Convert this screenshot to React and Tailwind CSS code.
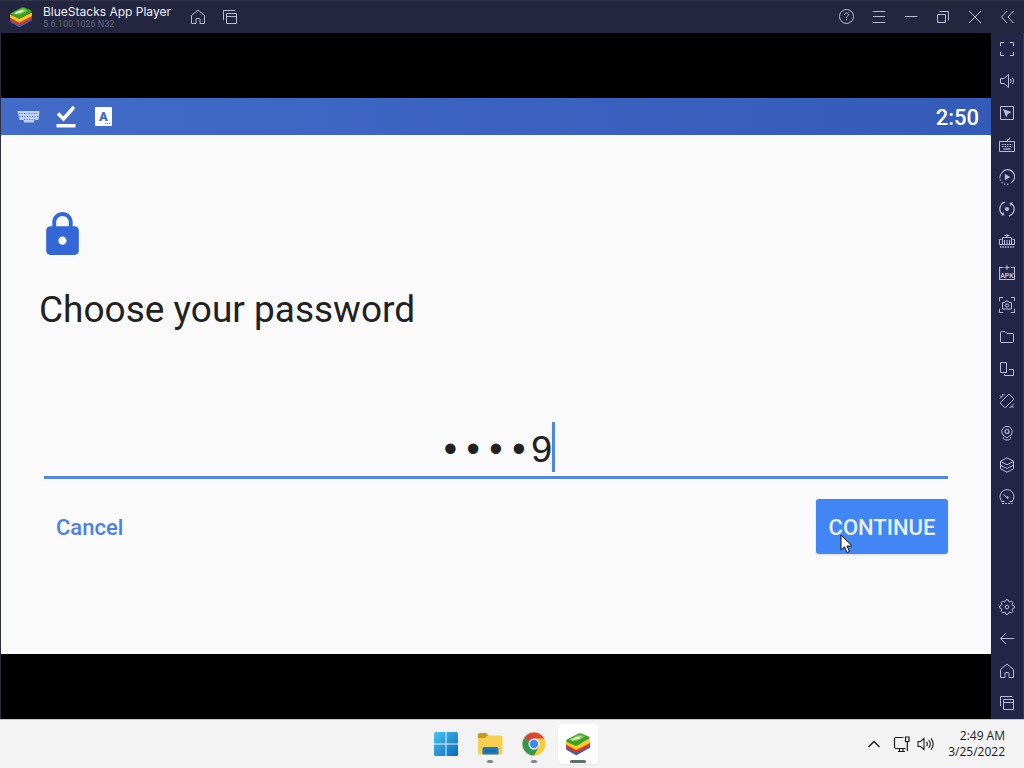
import React from 'react';

function Line({ children, size = 16, className = '' }) {
  return (
    <svg
      width={size}
      height={size}
      viewBox="0 0 16 16"
      fill="none"
      stroke="currentColor"
      strokeWidth="1"
      className={className}
      aria-hidden="true"
    >
      {children}
    </svg>
  );
}

const HomeIcon = () => (
  <Line>
    <path d="M1.500 6.500 8 1l6.500 5.500v8h-4.500V10.500a1 1 0 0 0-1-1H7a1 1 0 0 0-1 1v4H1.500z" strokeLinejoin="round" />
  </Line>
);

const RecentsIcon = () => (
  <Line>
    <path d="M1.500 11V1.500H13M4.500 4.500h10v10h-10zM4.500 7.500h10" />
  </Line>
);

const HelpIcon = () => (
  <Line>
    <circle cx="7.500" cy="7.500" r="7" />
    <path d="M5.500 6c0-1.200.8-2 2-2s2 .8 2 1.800c0 1.300-2 1.400-2 3M7.500 10v1.200" />
  </Line>
);

const MenuIcon = () => (
  <Line>
    <path d="M2 2.500h12M2 7.500h12M2 13.500h12" />
  </Line>
);

const MinimizeIcon = () => (
  <Line>
    <path d="M2 7.500h12" />
  </Line>
);

const RestoreIcon = () => (
  <Line>
    <path d="M2.500 5.500h8v8h-8zM4.500 2.500h9v9" />
  </Line>
);

const CloseIcon = () => (
  <Line>
    <path d="m2 2 12 12M14 2 2 14" />
  </Line>
);

const CollapseIcon = () => (
  <Line>
    <path d="M8 2 2.500 8 8 14M14.500 2 9 8l5.500 6" />
  </Line>
);

const FullscreenIcon = () => (
  <Line>
    <path d="M1.500 5V1.500H5M11 1.500h3.500V5M14.500 11v3.500H11M5 14.500H1.500V11" />
  </Line>
);

const VolumeIcon = () => (
  <Line>
    <path d="M1.500 5.500H5L9.500 1.500v13L5 10.500H1.500zM11.500 6c.8 1.200.8 2.800 0 4M13.500 4.800c1.300 2 1.300 4.400 0 6.400" />
  </Line>
);

const CursorLockIcon = () => (
  <Line>
    <path d="M1.500 1.500h13v13h-13z" />
    <path d="m4 4 8.500 3-3.500 1.800L7.200 12.500z" fill="currentColor" stroke="none" />
  </Line>
);

const KeyboardIcon = () => (
  <Line>
    <path d="M.5 4.500h15v10H.5zM8.500 4.500V2.500h2V.5" />
    <path d="M3 7.500h10.500M3 9.500h10.500" strokeDasharray="1.500 1" />
    <path d="M4.500 12h7" strokeWidth="1.300" />
  </Line>
);

const PlayMacroIcon = () => (
  <Line>
    <path d="M3 3.500a7 7 0 1 1 9.500 10" strokeWidth="1.200" />
    <path d="M.8 7.500a7 7 0 0 0 10.500 6.800" strokeWidth="1.200" strokeDasharray="1.200 1.800" />
    <path d="M1.200 7.500Q1.200 5.500 3 3.500" />
    <path d="m5.800 4.800 5.400 3.200-5.400 3.200z" fill="currentColor" stroke="none" />
  </Line>
);

const SyncIcon = () => (
  <Line>
    <path d="M6 1.200A7 7 0 0 0 4 13.800M10 14.800a7 7 0 0 0 2-12.600" strokeWidth="1.200" />
    <path d="m2 14.500 3.500-.2L4.500 11zM14 1.500l-3.500.2 1 3.300z" fill="currentColor" stroke="none" />
    <circle cx="8" cy="8" r="2.100" fill="currentColor" stroke="none" />
  </Line>
);

const MemoryIcon = () => (
  <Line>
    <path d="M2.500 6.500h-2v5h15v-5h-2M3.500 11V4.500h9V11M8 4.500V1M5.500 2.500h5" />
    <path d="M5.500 7v4M8 7v4M10.500 7v4" />
    <path d="M1 14h14" strokeWidth="1.500" strokeDasharray="1.500 1" />
  </Line>
);

const ApkIcon = () => (
  <Line>
    <path d="M4 2.500H.5v12h15v-12H12" strokeWidth="1.200" />
    <path d="M8 0v5M5.500 2.500h5" />
    <text x="8" y="12.500" textAnchor="middle" fill="currentColor" stroke="none" className="font-['Roboto',sans-serif] text-[7px] font-bold">APK</text>
  </Line>
);

const ScreenshotIcon = () => (
  <Line>
    <path d="M.5 4V.5H4M12 .5h3.500V4M15.500 12v3.500H12M4 15.500H.5V12" />
    <path d="M3.500 5.500H6l1-1.500h2l1 1.500h2.500v6.500h-9z" />
    <circle cx="8" cy="8.500" r="1.600" />
  </Line>
);

const FolderIcon = () => (
  <Line>
    <path d="M1.500 3.500a1 1 0 0 1 1-1H6l2 2h5.500a1 1 0 0 1 1 1v7a1 1 0 0 1-1 1h-11a1 1 0 0 1-1-1z" />
  </Line>
);

const MultiScreenIcon = () => (
  <Line>
    <path d="M1.500 1.500h6v10h-6zM10 8.500h4.500v6h-9V13" />
  </Line>
);

const RotateIcon = () => (
  <Line>
    <path d="m1.700 9.200 7.600-7.500a1 1 0 0 1 1.400 0l3.600 3.600a1 1 0 0 1 0 1.400l-7.600 7.600a1 1 0 0 1-1.400 0l-3.600-3.700a1 1 0 0 1 0-1.400z" />
    <path d="M1 5.500 5.500 1M1 2.500l1.500 1.500M4 1l-1 1M10.500 15l4.500-4.500M12 14.500l1.500-1.500M13.500 15l1.500-1.500" />
  </Line>
);

const LocationIcon = () => (
  <Line>
    <path d="M6.200 11.500a5.200 5.200 0 1 1 3.600 0L8 13z" />
    <circle cx="8" cy="6.500" r="2" strokeWidth="1.200" />
    <path d="M5 12c-2 1.200 0 3 3 3s5-1.800 3-3" />
  </Line>
);

const LayersIcon = () => (
  <Line>
    <path d="m8 .8 6.500 3.400v7.600L8 15.200l-6.500-3.400V4.200zM1.500 4.500 8 7.800l6.500-3.300M1.500 8.200 8 11.500l6.500-3.300" strokeLinejoin="round" />
  </Line>
);

const GaugeIcon = () => (
  <Line>
    <path d="M3 12.500a7 7 0 1 1 10 0M4.500 5.500 8.500 9" />
    <circle cx="8.500" cy="8.500" r=".8" fill="currentColor" />
    <path d="M2.500 12.500h3M10.500 12.500h3" />
    <path d="M3 14.500h10.500" strokeDasharray="2 1" />
  </Line>
);

const SettingsIcon = () => (
  <Line>
    <path
      d="M6.500 2.300 7 .7h2l.5 1.600 1.400.6 1.500-.8 1.500 1.500-.8 1.500.6 1.400 1.600.5v2l-1.600.5-.6 1.400.8 1.500-1.500 1.500-1.500-.8-1.400.6-.5 1.600H7l-.5-1.600-1.400-.6-1.500.8-1.500-1.500.8-1.500-.6-1.400L.7 9V7l1.600-.5.6-1.400-.8-1.500 1.500-1.500 1.500.8z"
      strokeLinejoin="round"
    />
    <circle cx="8" cy="8" r="1.800" />
  </Line>
);

const BackIcon = () => (
  <Line>
    <path d="M15 7.500H1.500M7 2 1.500 7.500 7 13" />
  </Line>
);

function BlueStacksLogo({ className }) {
  return (
    <svg viewBox="0 0 24 22" className={className} aria-hidden="true">
      <path d="M0 13.500 10 19l14-7v2.800L11 22q-1 .3-2-.2L.8 17Q0 16.500 0 15.500z" fill="#2b6cb5" />
      <path d="M0 10.500 10 16l14-7v4L11 19.800q-1 .3-2-.2L.8 15Q0 14.500 0 13.500z" fill="#e0322b" />
      <path d="M0 8 10 13l14-7v4L11 16.800q-1 .3-2-.2L.8 12Q0 11.500 0 10.500z" fill="#fbc91b" />
      <path d="M1 6.500 12.500.5q1.500-.6 3 0L23 3.700q1.500.9 0 2L11.500 12.500q-1.500.6-3 0L1 9q-1.500-1.200 0-2.500z" fill="#3e9f25" />
      <path d="M2.500 6.800 13 1.600q1-.4 2 0l4.500 2-8 4.400-5 .2z" fill="#79c64c" />
      <path d="M5 6.500 10 4l6-.8-2.500 1.300 1.500.7-5.500 1.400-3 .8z" fill="#e3f6d5" />
    </svg>
  );
}

function WindowsLogo() {
  return (
    <svg width="24" height="24" viewBox="0 0 24 24" aria-hidden="true">
      <defs>
        <linearGradient id="win" x1="0" y1="0" x2="1" y2="1">
          <stop offset="0" stopColor="#49c4f0" />
          <stop offset="1" stopColor="#0868bd" />
        </linearGradient>
      </defs>
      <path d="M1.500 0H11.500V11.500H0V1.500Q0 0 1.500 0zM12.500 0h10Q24 0 24 1.500v10H12.500zM0 12.500h11.500V24h-10Q0 24 0 22.500zM12.500 12.500H24v10q0 1.500-1.500 1.500h-10z" fill="url(#win)" />
    </svg>
  );
}

function ExplorerLogo() {
  return (
    <svg width="26" height="24" viewBox="0 0 26 24" aria-hidden="true">
      <path d="M1 3Q1 1 3 1h6l3 3h-2L8 7H1z" fill="#c59a1b" />
      <path d="M1 6h7l3-2.500h13q1.500 0 1.500 1.500v16q0 1.500-1.500 1.500H2.500Q1 22.500 1 21z" fill="#f9cf52" />
      <path d="M5.500 22.500V17q0-2 2-2h12q2 0 2 2v5.500z" fill="#1d78bd" />
      <path d="M8 19h11" stroke="#12609f" />
    </svg>
  );
}

function ChromeLogo() {
  return (
    <svg width="24" height="24" viewBox="0 0 24 24" aria-hidden="true">
      <circle cx="12" cy="12" r="11.500" fill="#fbcb35" />
      <path d="M12 12 2.040 6.250A11.500 11.500 0 0 1 21.960 6.250L22 6.500H12z" fill="#dc4437" />
      <path d="M2.040 6.250A11.500 11.500 0 0 0 12 23.500L17 14.800 12 12z" fill="#31984e" />
      <circle cx="12" cy="12" r="5.500" fill="#fff" />
      <circle cx="12" cy="12" r="4.300" fill="#4286f0" />
    </svg>
  );
}

function IconButton({ label, children }) {
  return (
    <button type="button" aria-label={label} className="flex h-8 w-8 shrink-0 items-center justify-center">
      {children}
    </button>
  );
}

const sideTools = [
  ['Full screen', FullscreenIcon],
  ['Volume', VolumeIcon],
  ['Lock cursor', CursorLockIcon],
  ['Game controls', KeyboardIcon],
  ['Macro recorder', PlayMacroIcon],
  ['Sync operations', SyncIcon],
  ['Trim memory', MemoryIcon],
  ['Install APK', ApkIcon],
  ['Screenshot', ScreenshotIcon],
  ['Media folder', FolderIcon],
  ['Multi-instance', MultiScreenIcon],
  ['Rotate', RotateIcon],
  ['Set location', LocationIcon],
  ['Layers', LayersIcon],
  ['Performance', GaugeIcon],
];

const navTools = [
  ['Settings', SettingsIcon],
  ['Back', BackIcon],
  ['Home', HomeIcon],
  ['Recent apps', RecentsIcon],
];

function TitleBar() {
  return (
    <header className="flex h-[33px] items-center border-t border-[#32344c] bg-[#24263f] pl-2.5 pr-px">
      <BlueStacksLogo className="h-5 w-[22px]" />
      <div className="ml-[11px] w-[139px] whitespace-nowrap">
        <h1 className="font-['Inter',sans-serif] text-[12px] leading-[14px] text-[#f0f0f8]">BlueStacks App Player</h1>
        <p className="text-[9px] leading-[11px] text-[#606279]">5.6.100.1026 N32</p>
      </div>
      <IconButton label="Home"><HomeIcon /></IconButton>
      <IconButton label="Recent apps"><RecentsIcon /></IconButton>
      <div className="ml-auto flex">
        <IconButton label="Help"><HelpIcon /></IconButton>
        <IconButton label="Menu"><MenuIcon /></IconButton>
        <IconButton label="Minimize"><MinimizeIcon /></IconButton>
        <IconButton label="Restore"><RestoreIcon /></IconButton>
        <IconButton label="Close"><CloseIcon /></IconButton>
        <IconButton label="Collapse sidebar"><CollapseIcon /></IconButton>
      </div>
    </header>
  );
}

function StatusBar() {
  return (
    <div className="flex h-[37px] items-center bg-gradient-to-r from-[#426cc8] via-[#3b62c0] to-[#345bb7] pl-4 pr-3 text-white">
      <svg width="24" height="14" viewBox="0 0 24 14" aria-hidden="true">
        <path d="M.5 1h22l-1 9h-4l-.5 2.500H7L6.500 10h-4z" fill="#bfd0f3" />
        <path d="M2 3.500h20M2.500 6.500h19M7 9.500h11" stroke="#426cc8" strokeDasharray="1 1.500" />
      </svg>
      <svg width="20" height="23" viewBox="0 0 20 23" className="ml-[15px]" aria-hidden="true">
        <path d="m2 8.500 5.500 5.500L18 2" fill="none" stroke="#fff" strokeWidth="3.500" />
        <path d="M.5 19h19v3.500H.5z" fill="#fff" />
      </svg>
      <svg width="17" height="19" viewBox="0 0 17 19" className="ml-[19px]" aria-hidden="true">
        <rect width="17" height="19" rx="1" fill="#fff" />
        <text x="8.500" y="14" textAnchor="middle" fill="#426cc8" className="text-[13px] font-black">A</text>
        <path d="M10 16.500h5" stroke="#426cc8" strokeDasharray="1 1" />
      </svg>
      <time className="ml-auto pt-0.5 text-[22px] font-medium leading-6">2:50</time>
    </div>
  );
}

function PasswordScreen() {
  return (
    <main className="pt-[75px] text-[#212121]">
      <div className="px-[37px]">
        <svg width="49" height="49" viewBox="0 0 24 24" fill="#3367d6" aria-hidden="true">
          <path d="M18 8h-1V6c0-2.760-2.240-5-5-5S7 3.240 7 6v2H6c-1.100 0-2 .9-2 2v10c0 1.100.9 2 2 2h12c1.100 0 2-.9 2-2V10c0-1.100-.9-2-2-2zm-6 9c-1.100 0-2-.9-2-2s.9-2 2-2 2 .9 2 2-.9 2-2 2zm3.100-9H8.900V6c0-1.710 1.390-3.100 3.100-3.100s3.100 1.390 3.100 3.100v2z" />
        </svg>
        <h2 className="mt-[27px] pl-px text-[37px] leading-[48px]">
          <label htmlFor="password">Choose your password</label>
        </h2>
      </div>
      <form className="mt-[88px] px-[43px]" onSubmit={(e) => e.preventDefault()}>
        <div className="relative border-b-3 border-[#5086e4]">
          <input
            id="password"
            type="text"
            defaultValue="••••9"
            className="block h-[54px] w-full bg-transparent pt-1 text-center font-['Liberation_Mono',monospace] text-[38px] outline-none"
          />
          <span className="absolute left-1/2 top-0 ml-14 h-[50px] w-[3px] bg-[#5086e4]" />
        </div>
        <div className="mt-5 flex items-center justify-between text-[22px] font-medium">
          <button type="button" className="h-[55px] px-3 pt-0.5 text-[#4b80e6]">Cancel</button>
          <div className="relative">
            <button type="submit" className="h-[55px] min-w-[132px] rounded-[3px] bg-[#4285f4] pt-0.5 text-[#e9f1ff] shadow-sm">CONTINUE</button>
            <svg width="13" height="20" viewBox="0 0 13 20" className="absolute left-6 top-[35px]" aria-hidden="true">
              <path d="M1 1v15l3.500-3.200L7 18.500l2.500-1L7 12h5z" fill="#fff" stroke="#111" strokeWidth="1" />
            </svg>
          </div>
        </div>
      </form>
    </main>
  );
}

function SideBar() {
  return (
    <aside className="flex w-[33px] shrink-0 flex-col justify-between border-r border-[#34365a] bg-[#222546]">
      <div>
        {sideTools.map(([label, Icon]) => (
          <IconButton key={label} label={label}><Icon /></IconButton>
        ))}
      </div>
      <div>
        {navTools.map(([label, Icon]) => (
          <IconButton key={label} label={label}><Icon /></IconButton>
        ))}
      </div>
    </aside>
  );
}

function TaskButton({ label, active, running, children }) {
  return (
    <button
      type="button"
      aria-label={label}
      className={`relative flex h-10 w-10 items-center justify-center rounded-sm ${active ? 'bg-white shadow-xs' : ''}`}
    >
      {children}
      {running && (
        <span className={`absolute bottom-px h-[3px] rounded-full ${active ? 'w-4 bg-[#5d716b]' : 'w-1.5 bg-[#85878a]'}`} />
      )}
    </button>
  );
}

function TaskBar() {
  return (
    <footer className="grid h-[49px] grid-cols-[1fr_auto_1fr] items-center border-t border-[#c8c8c8] bg-[#f3f3f3] text-[#1b1b1b]">
      <div className="col-start-2 flex gap-1">
        <TaskButton label="Start"><WindowsLogo /></TaskButton>
        <TaskButton label="File Explorer" running><ExplorerLogo /></TaskButton>
        <TaskButton label="Chrome" running><ChromeLogo /></TaskButton>
        <TaskButton label="BlueStacks" running active><BlueStacksLogo className="h-[22px] w-6" /></TaskButton>
      </div>
      <div className="flex items-center justify-end pr-[19px]">
        <button type="button" aria-label="Show hidden icons">
          <svg width="14" height="8" viewBox="0 0 14 8" fill="none" stroke="currentColor" strokeWidth="1.400" aria-hidden="true">
            <path d="m1.500 7 5.500-5.500L12.500 7" />
          </svg>
        </button>
        <button type="button" aria-label="Network" className="ml-3">
          <svg width="18" height="17" viewBox="0 0 18 17" fill="none" stroke="currentColor" strokeWidth="1.200" aria-hidden="true">
            <path d="M10.500 1.500H3q-1.500 0-1.500 1.500v8q0 1.500 1.500 1.500h9.500M5 15.500h7M6.500 12.500v3M10 12.500v3M12.500 1h3.500v4.500h-3.500zM14.300 5.500v9.500" />
          </svg>
        </button>
        <button type="button" aria-label="Sound" className="ml-1.5">
          <svg width="18" height="16" viewBox="0 0 18 16" fill="none" stroke="currentColor" strokeWidth="1.100" aria-hidden="true">
            <path d="M1 5.500h2.500L7 2.500v11l-3.500-3H1zM9.500 5.800c1 1.300 1 3.100 0 4.400M11.800 4c1.800 2.400 1.800 5.600 0 8M14 2.300c2.600 3.400 2.600 8 0 11.400" />
          </svg>
        </button>
        <div className="ml-[13px] text-right font-['Open_Sans',sans-serif] text-[12px] leading-4">
          <div>2:49 AM</div>
          <div>3/25/2022</div>
        </div>
      </div>
    </footer>
  );
}

export default function App() {
  return (
    <div className="flex min-h-screen flex-col bg-black font-['Roboto',sans-serif]">
      <div className="flex flex-1 flex-col text-[#b9bbdc]">
        <TitleBar />
        <div className="flex flex-1">
          <div className="flex min-w-0 flex-1 flex-col justify-center border-l border-[#2c2e40] bg-black">
            <div className="aspect-[990/556] w-full bg-[#fafafa]">
              <StatusBar />
              <PasswordScreen />
            </div>
          </div>
          <SideBar />
        </div>
      </div>
      <TaskBar />
    </div>
  );
}
